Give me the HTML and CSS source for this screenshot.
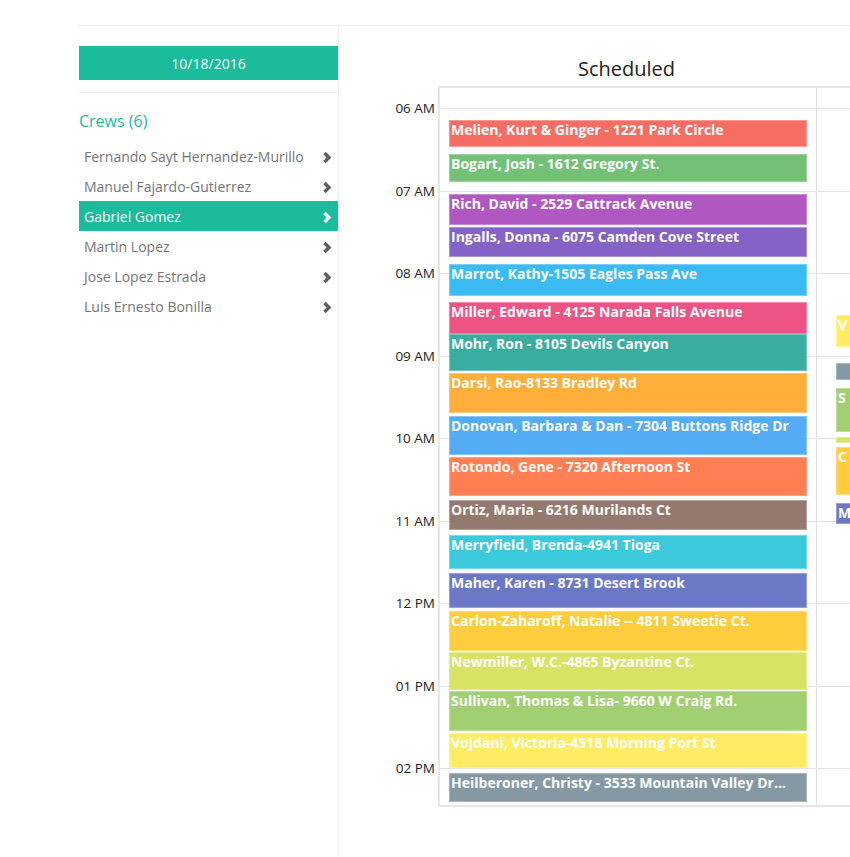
FILE: index.html
```html
<!DOCTYPE html>
<html lang="en">
<head>
    <meta charset="UTF-8">
    <meta name="viewport" content="width=device-width, initial-scale=1.0">
    <title>Crew Schedule</title>
    <link rel="stylesheet" href="styles.css">
</head>
<body>
    <div class="layout">
        <aside class="sidebar">
            <div class="date-btn">10/18/2016</div>
            <h3 class="crews-title">Crews (6)</h3>
            <ul class="crew-list">
                <li class="crew">Fernando Sayt Hernandez-Murillo <svg class="chev" viewBox="0 0 10 13"><polyline points="2.5,2 7,6.5 2.5,11"/></svg></li>
                <li class="crew">Manuel Fajardo-Gutierrez <svg class="chev" viewBox="0 0 10 13"><polyline points="2.5,2 7,6.5 2.5,11"/></svg></li>
                <li class="crew active">Gabriel Gomez <svg class="chev" viewBox="0 0 10 13"><polyline points="2.5,2 7,6.5 2.5,11"/></svg></li>
                <li class="crew">Martin Lopez <svg class="chev" viewBox="0 0 10 13"><polyline points="2.5,2 7,6.5 2.5,11"/></svg></li>
                <li class="crew">Jose Lopez Estrada <svg class="chev" viewBox="0 0 10 13"><polyline points="2.5,2 7,6.5 2.5,11"/></svg></li>
                <li class="crew">Luis Ernesto Bonilla <svg class="chev" viewBox="0 0 10 13"><polyline points="2.5,2 7,6.5 2.5,11"/></svg></li>
            </ul>
        </aside>

        <main class="schedule">
            <div class="col-heads">
                <div class="axis-spacer"></div>
                <div class="col-head">Scheduled</div>
                <div class="col-head"></div>
            </div>

            <div class="sched-body">
                <div class="axis">
                    <div class="axis-top"></div>
                    <div class="axis-row"><span>06 AM</span></div>
                    <div class="axis-row"><span>07 AM</span></div>
                    <div class="axis-row"><span>08 AM</span></div>
                    <div class="axis-row"><span>09 AM</span></div>
                    <div class="axis-row"><span>10 AM</span></div>
                    <div class="axis-row"><span>11 AM</span></div>
                    <div class="axis-row"><span>12 PM</span></div>
                    <div class="axis-row"><span>01 PM</span></div>
                    <div class="axis-row last"><span>02 PM</span></div>
                </div>

                <div class="grid">
                    <div class="col">
                        <div class="hours">
                            <div class="hour-top"></div>
                            <div class="hour"></div><div class="hour"></div><div class="hour"></div>
                            <div class="hour"></div><div class="hour"></div><div class="hour"></div>
                            <div class="hour"></div><div class="hour"></div><div class="hour last"></div>
                        </div>
                        <div class="event red" style="top:32px;height:27px">Melien, Kurt &amp; Ginger - 1221 Park Circle</div>
                        <div class="event green" style="top:66px;height:28px">Bogart, Josh - 1612 Gregory St.</div>
                        <div class="event purple" style="top:106px;height:31px">Rich, David - 2529 Cattrack Avenue</div>
                        <div class="event deep-purple" style="top:139px;height:30px">Ingalls, Donna - 6075 Camden Cove Street</div>
                        <div class="event light-blue" style="top:176px;height:32px">Marrot, Kathy-1505 Eagles Pass Ave</div>
                        <div class="event pink" style="top:214px;height:32px">Miller, Edward - 4125 Narada Falls Avenue</div>
                        <div class="event teal" style="top:246px;height:37px">Mohr, Ron - 8105 Devils Canyon</div>
                        <div class="event orange" style="top:285px;height:40px">Darsi, Rao-8133 Bradley Rd</div>
                        <div class="event blue" style="top:328px;height:39px">Donovan, Barbara &amp; Dan - 7304 Buttons Ridge Dr</div>
                        <div class="event deep-orange" style="top:369px;height:39px">Rotondo, Gene - 7320 Afternoon St</div>
                        <div class="event brown" style="top:412px;height:30px">Ortiz, Maria - 6216 Murilands Ct</div>
                        <div class="event cyan" style="top:447px;height:34px">Merryfield, Brenda-4941 Tioga</div>
                        <div class="event indigo" style="top:485px;height:35px">Maher, Karen - 8731 Desert Brook</div>
                        <div class="event amber" style="top:523px;height:40px">Carlon-Zaharoff, Natalie -- 4811 Sweetie Ct.</div>
                        <div class="event lime" style="top:564px;height:38px">Newmiller, W.C.-4865 Byzantine Ct.</div>
                        <div class="event light-green" style="top:603px;height:40px">Sullivan, Thomas &amp; Lisa- 9660 W Craig Rd.</div>
                        <div class="event yellow" style="top:645px;height:35px">Vojdani, Victoria-4518 Morning Port St</div>
                        <div class="event blue-grey" style="top:685px;height:29px">Heilberoner, Christy - 3533 Mountain Valley Dr...</div>
                    </div>
                    <div class="col second">
                        <div class="hours">
                            <div class="hour-top"></div>
                            <div class="hour"></div><div class="hour"></div><div class="hour"></div>
                            <div class="hour"></div><div class="hour"></div><div class="hour"></div>
                            <div class="hour"></div><div class="hour"></div><div class="hour last"></div>
                        </div>
                        <div class="event yellow" style="top:227px;height:32px">V</div>
                        <div class="event blue-grey" style="top:275px;height:17px"></div>
                        <div class="event light-green" style="top:300px;height:44px">S</div>
                        <div class="event lime" style="top:349px;height:6px"></div>
                        <div class="event amber" style="top:359px;height:48px">C</div>
                        <div class="event indigo" style="top:415px;height:21px">M</div>
                    </div>
                </div>
            </div>
        </main>
    </div>
</body>
</html>
```

FILE: styles.css
```css
html, body {
    margin: 0;
    padding: 0;
    overflow: hidden;
}
body {
    font-family: "Open Sans", Arial, sans-serif;
    color: #333;
    background: #fff;
}
.layout {
    display: flex;
    margin: 25px 0 0 79px;
    border-top: 1px solid #eee;
    min-height: calc(100vh - 26px);
    width: 1200px;
}

/* sidebar */
.sidebar {
    width: 259px;
    flex: none;
    border-right: 1px solid #eee;
    padding-top: 20px;
}
.date-btn {
    background: #1abc9c;
    color: #fff;
    font-size: 14px;
    height: 34px;
    line-height: 35px;
    text-align: center;
}
.crews-title {
    margin: 12px 0 0;
    border-top: 1px solid #eee;
    padding-top: 16px;
    font-size: 16px;
    font-weight: 400;
    line-height: 24px;
    color: #1abc9c;
}
.crew-list {
    list-style: none;
    margin: 8px 0 0;
    padding: 0;
}
.crew {
    display: flex;
    justify-content: space-between;
    align-items: center;
    height: 30px;
    padding: 0 6px 0 5px;
    font-size: 14px;
    color: #767676;
}
.crew.active {
    background: #1abc9c;
    color: #fff;
}
.chev {
    width: 10px;
    height: 13px;
    margin-top: 2px;
    fill: none;
    stroke: #5e5e5e;
    stroke-width: 3.4;
}
.crew.active .chev {
    stroke: #fff;
}

/* schedule */
.schedule {
    flex: none;
}
.col-heads {
    display: flex;
    height: 60px;
    align-items: flex-end;
}
.axis-spacer {
    width: 99px;
}
.col-head {
    width: 377px;
    text-align: center;
    font-size: 20px;
    line-height: 28px;
    color: #222;
    padding-bottom: 3px;
}
.sched-body {
    display: flex;
}
.axis {
    width: 96px;
    padding-right: 3px;
    padding-top: 2px;
}
.axis-top {
    height: 20px;
}
.axis-row {
    height: 82.5px;
    font-size: 13.5px;
    text-align: right;
    color: #222;
}
.axis-row span {
    display: block;
    line-height: 18px;
    transform: translateY(-9px);
}
.axis-row.last {
    height: 37px;
}
.grid {
    display: flex;
    border-top: 2px solid #e6e6e6;
    border-bottom: 2px solid #e6e6e6;
    border-left: 2px solid #e6e6e6;
}
.col {
    position: relative;
    width: 376px;
    border-right: 1px solid #e0e0e0;
}
.hour-top {
    height: 20px;
}
.hour {
    height: 82.5px;
    box-sizing: border-box;
    border-top: 1px solid #e3e3e3;
}
.hour.last {
    height: 37px;
}
.event {
    position: absolute;
    left: 9px;
    width: 358px;
    box-sizing: border-box;
    padding: 0 1px;
    border: 1px solid rgba(255, 255, 255, 0.3);
    color: #fff;
    font-size: 14px;
    font-weight: 700;
    line-height: 18px;
    white-space: nowrap;
    overflow: hidden;
    text-overflow: ellipsis;
    opacity: 0.95;
}
.col.second .event {
    left: 19px;
}

.red { background: #f6665b; }
.green { background: #6bbe70; }
.purple { background: #ad4fbe; }
.deep-purple { background: #7f5ac3; }
.light-blue { background: #30b8f4; }
.pink { background: #ed4a7f; }
.teal { background: #30a99c; }
.orange { background: #ffaa30; }
.blue { background: #4aa8f4; }
.deep-orange { background: #ff784b; }
.brown { background: #8f7268; }
.cyan { background: #30c8db; }
.indigo { background: #6371c2; }
.amber { background: #ffcb33; }
.lime { background: #d6e25e; }
.light-green { background: #9ecd6a; }
.yellow { background: #ffec5c; }
.blue-grey { background: #7e949f; }
```
